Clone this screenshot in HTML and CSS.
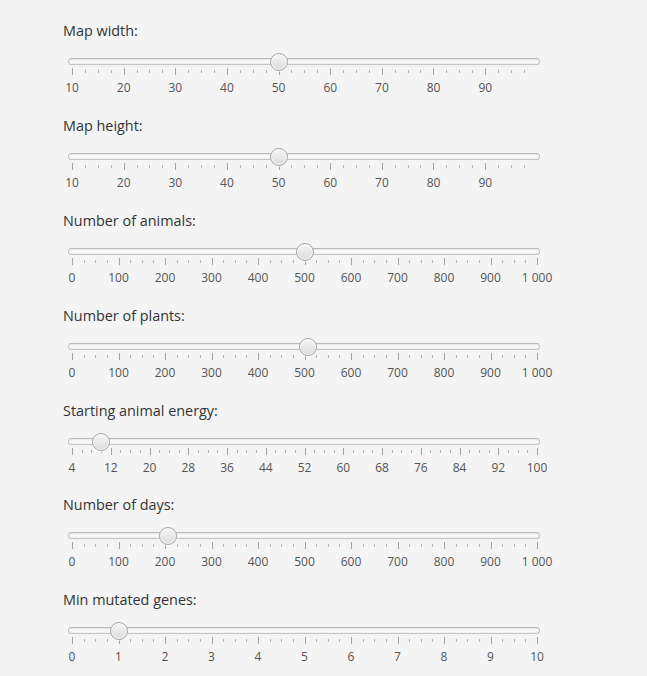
FILE: index.html
```html
<!DOCTYPE html>
<html>
<head>
<meta charset="utf-8">
<link rel="stylesheet" href="styles.css">
</head>
<body>
<main class="form">
  <section class="field">
    <div class="title">Map width:</div>
    <div class="slider" style="--major:51.6667px">
      <div class="track"></div>
      <div class="thumb" style="left:206.7px"></div>
      <div class="ticks" data-intervals="35" data-step="12.91667"></div>
      <div class="labels"><span>10</span><span>20</span><span>30</span><span>40</span><span>50</span><span>60</span><span>70</span><span>80</span><span>90</span></div>
    </div>
  </section>
  <section class="field">
    <div class="title">Map height:</div>
    <div class="slider" style="--major:51.6667px">
      <div class="track"></div>
      <div class="thumb" style="left:206.7px"></div>
      <div class="ticks" data-intervals="35" data-step="12.91667"></div>
      <div class="labels"><span>10</span><span>20</span><span>30</span><span>40</span><span>50</span><span>60</span><span>70</span><span>80</span><span>90</span></div>
    </div>
  </section>
  <section class="field">
    <div class="title">Number of animals:</div>
    <div class="slider" style="--major:46.5px">
      <div class="track"></div>
      <div class="thumb" style="left:232.5px"></div>
      <div class="ticks" data-intervals="40" data-step="11.625"></div>
      <div class="labels"><span>0</span><span>100</span><span>200</span><span>300</span><span>400</span><span>500</span><span>600</span><span>700</span><span>800</span><span>900</span><span>1 000</span></div>
    </div>
  </section>
  <section class="field">
    <div class="title">Number of plants:</div>
    <div class="slider" style="--major:46.5px">
      <div class="track"></div>
      <div class="thumb" style="left:235.5px"></div>
      <div class="ticks" data-intervals="40" data-step="11.625"></div>
      <div class="labels"><span>0</span><span>100</span><span>200</span><span>300</span><span>400</span><span>500</span><span>600</span><span>700</span><span>800</span><span>900</span><span>1 000</span></div>
    </div>
  </section>
  <section class="field">
    <div class="title">Starting animal energy:</div>
    <div class="slider" style="--major:38.75px">
      <div class="track"></div>
      <div class="thumb" style="left:29px"></div>
      <div class="ticks" data-intervals="48" data-step="9.6875"></div>
      <div class="labels"><span>4</span><span>12</span><span>20</span><span>28</span><span>36</span><span>44</span><span>52</span><span>60</span><span>68</span><span>76</span><span>84</span><span>92</span><span>100</span></div>
    </div>
  </section>
  <section class="field">
    <div class="title">Number of days:</div>
    <div class="slider" style="--major:46.5px">
      <div class="track"></div>
      <div class="thumb" style="left:96px"></div>
      <div class="ticks" data-intervals="40" data-step="11.625"></div>
      <div class="labels"><span>0</span><span>100</span><span>200</span><span>300</span><span>400</span><span>500</span><span>600</span><span>700</span><span>800</span><span>900</span><span>1 000</span></div>
    </div>
  </section>
  <section class="field">
    <div class="title">Min mutated genes:</div>
    <div class="slider" style="--major:46.5px">
      <div class="track"></div>
      <div class="thumb" style="left:46.5px"></div>
      <div class="ticks" data-intervals="40" data-step="11.625"></div>
      <div class="labels"><span>0</span><span>1</span><span>2</span><span>3</span><span>4</span><span>5</span><span>6</span><span>7</span><span>8</span><span>9</span><span>10</span></div>
    </div>
  </section>
</main>
<script src="script.js"></script>
</body>
</html>
```
FILE: styles.css
```css
html, body {
  margin: 0;
  padding: 0;
  background: #f4f4f4;
}

body {
  font-family: "Open Sans", "Noto Sans", sans-serif;
  color: #333;
}

.form {
  display: flex;
  flex-direction: column;
  padding: 21px 0 0 63px;
}

.field {
  display: flex;
  flex-direction: column;
  height: 94.9px;
}

.title {
  font-size: 14.4px;
  line-height: 20px;
  height: 20px;
  color: #333;
}

.slider {
  position: relative;
  margin-top: 17px;
  padding-left: 9px;
  width: 466px;
}

.track {
  margin-left: -4px;
  width: 470px;
  height: 5px;
  border: 1px solid #c4c4c4;
  border-top-color: #b8b8b8;
  border-radius: 4px;
  background: linear-gradient(to bottom, #e6e6e6, #fbfbfb 45%, #f6f6f6 70%, #ececec);
}

.thumb {
  position: absolute;
  top: -5px;
  margin-left: 9px;
  width: 16px;
  height: 16px;
  transform: translateX(-50%);
  border: 1px solid #a6a6a6;
  border-radius: 50%;
  background: linear-gradient(to bottom, #f7f7f7, #e6e6e6 60%, #dcdcdc);
  box-shadow: inset 0 0 0 1px rgba(255, 255, 255, 0.7), 0 1px 0 rgba(255,255,255,0.6);
  box-sizing: content-box;
}

.ticks {
  display: flex;
  justify-content: space-between;
  align-items: flex-start;
  margin-top: 3px;
  height: 7px;
}

.tick {
  flex: 0 0 1px;
  width: 1px;
}

.tick-major {
  height: 7px;
  background: #a3a3a3;
}

.tick-minor {
  margin-top: 2px;
  height: 3px;
  background: #b3b3b3;
}

.labels {
  display: flex;
  margin-top: 5px;
  margin-left: calc(var(--major) / -2);
  height: 16px;
  font-size: 12px;
  line-height: 16px;
  color: #555;
}

.labels span {
  flex: 0 0 var(--major);
  text-align: center;
  white-space: nowrap;
}
```
FILE: script.js
```js
document.querySelectorAll('.ticks').forEach(function (row) {
  var n = parseInt(row.dataset.intervals, 10);
  var step = parseFloat(row.dataset.step);
  row.style.width = (n * step + 1) + 'px';
  for (var i = 0; i <= n; i++) {
    var t = document.createElement('span');
    t.className = 'tick ' + (i % 4 === 0 ? 'tick-major' : 'tick-minor');
    row.appendChild(t);
  }
});
```
